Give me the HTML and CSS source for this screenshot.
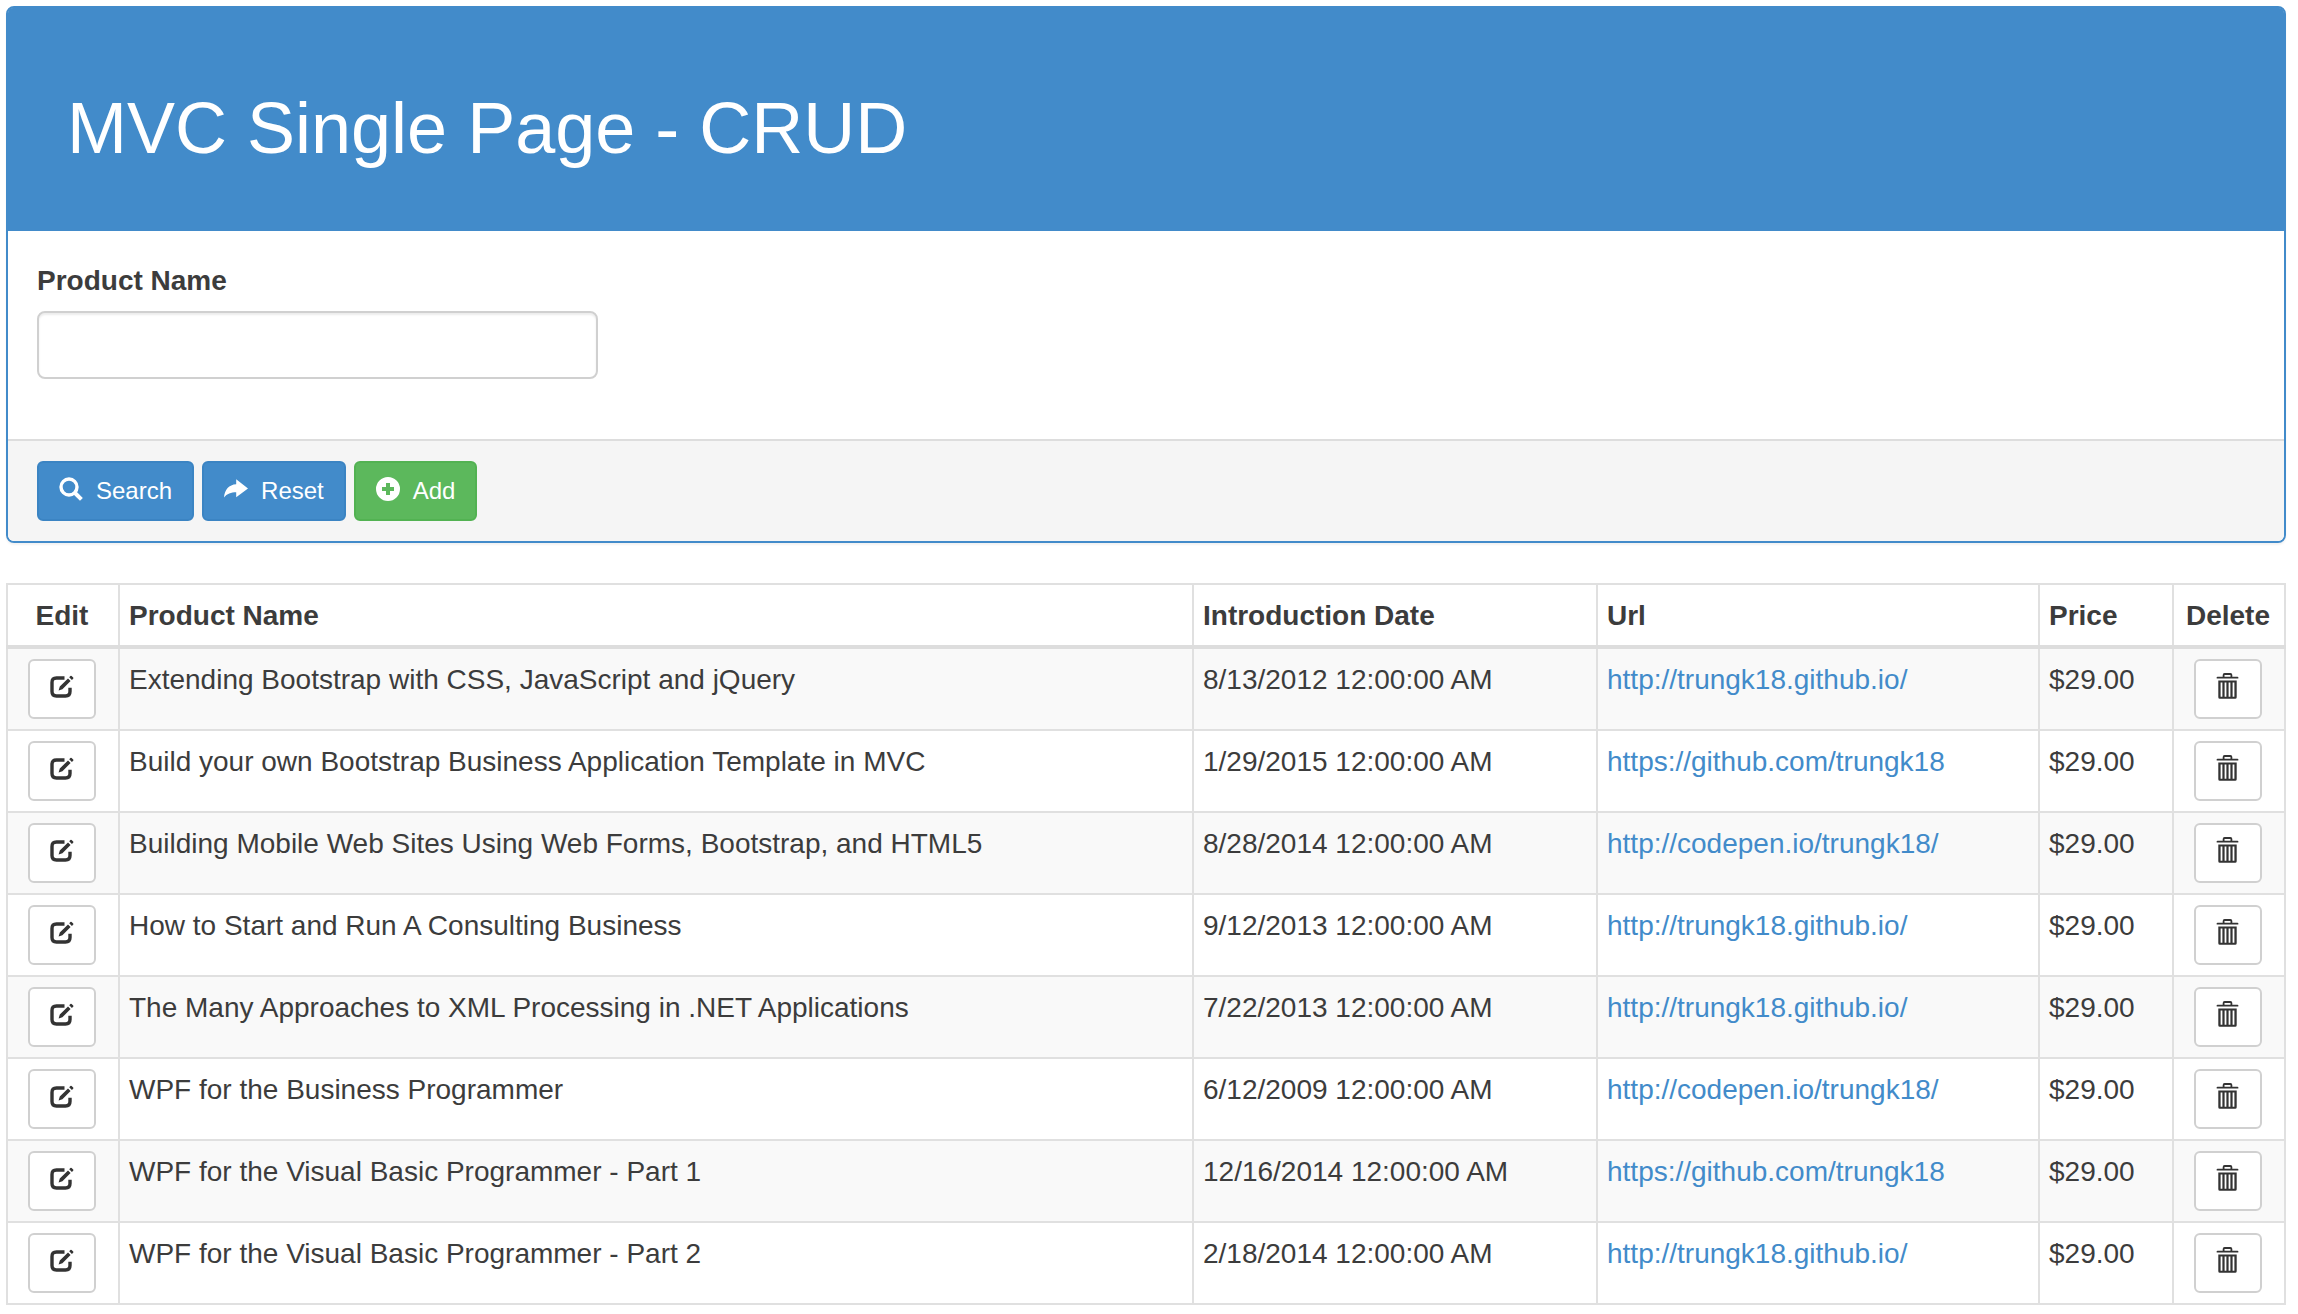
FILE: index.html
```html
<!DOCTYPE html>
<html lang="en">
<head>
<meta charset="utf-8">
<meta name="viewport" content="width=device-width, initial-scale=1">
<title>MVC Single Page - CRUD</title>
<link rel="stylesheet" href="styles.css">
</head>
<body>
<svg class="sprite" aria-hidden="true">
  <symbol id="icon-search" viewBox="0 0 24 24">
    <circle cx="10" cy="10" r="8" fill="none" stroke="currentColor" stroke-width="3.4"/>
    <path d="M15.5 15.5L22.4 22.4" stroke="currentColor" stroke-width="4"/>
  </symbol>
  <symbol id="icon-share" viewBox="0 0 24 24">
    <path d="M12.2 2.3L24 11.5L12.2 20.3V15.2C7 15.2 3 16.6 0 20.4C.6 12.6 5 7.6 12.2 7.2Z" fill="currentColor"/>
  </symbol>
  <symbol id="icon-plus" viewBox="0 0 24 24">
    <path fill-rule="evenodd" d="M12 0a12 12 0 1 0 0 24a12 12 0 1 0 0-24ZM10 6h4v4h4v4h-4v4h-4v-4H6v-4h4Z" fill="currentColor"/>
  </symbol>
  <symbol id="icon-edit" viewBox="0 0 24 24">
    <path d="M14.5 3H6.5Q2 3 2 7.5V16.5Q2 21 6.5 21H15.5Q20 21 20 16.5V12.8" fill="none" stroke="currentColor" stroke-width="3.4"/>
    <path d="M18 3.4L20.6 6L12.4 14.2L8.6 15.4L9.8 11.6ZM19.2 2.2L20.4 1Q21 .6 21.6 1L23.2 2.6Q23.6 3.2 23.2 3.8L21.9 4.9Z" fill="currentColor"/>
  </symbol>
  <symbol id="icon-trash" viewBox="0 0 24 26">
    <path d="M7.6 4V2Q7.6 1 8.6 1H14.4Q15.4 1 15.4 2V4" fill="none" stroke="currentColor" stroke-width="1.8"/>
    <path d="M.7 5.6V4.6Q.7 3.8 1.5 3.8H21.5Q22.3 3.8 22.3 4.6V5.6Z" fill="currentColor"/>
    <path fill-rule="evenodd" d="M2.3 7.6H20.7V24.2Q20.7 25.8 19.1 25.8H3.9Q2.3 25.8 2.3 24.2ZM4.6 9.6V23.8H6.4V9.6ZM8.6 9.6V23.8H10.4V9.6ZM12.6 9.6V23.8H14.4V9.6ZM16.6 9.6V23.8H18.4V9.6Z" fill="currentColor"/>
  </symbol>
</svg>

<form class="panel">
  <div class="panel-heading">
    <h1 class="panel-title">MVC Single Page - CRUD</h1>
  </div>
  <div class="panel-body">
    <label class="field-label" for="product-name">Product Name</label>
    <input class="field-input" id="product-name" type="text">
  </div>
  <div class="panel-footer">
    <button class="btn btn-primary" type="button"><svg class="icon"><use href="#icon-search"/></svg>Search</button>
    <button class="btn btn-primary" type="button"><svg class="icon"><use href="#icon-share"/></svg>Reset</button>
    <button class="btn btn-success" type="button"><svg class="icon"><use href="#icon-plus"/></svg>Add</button>
  </div>
</form>

<table class="products">
  <colgroup>
    <col class="col-action"><col><col class="col-date"><col class="col-url"><col class="col-price"><col class="col-action">
  </colgroup>
  <thead>
    <tr><th class="action">Edit</th><th>Product Name</th><th>Introduction Date</th><th>Url</th><th>Price</th><th class="action">Delete</th></tr>
  </thead>
  <tbody>
    <tr>
      <td class="action"><button class="btn btn-default" type="button" aria-label="Edit"><svg class="icon"><use href="#icon-edit"/></svg></button></td>
      <td>Extending Bootstrap with CSS, JavaScript and jQuery</td><td>8/13/2012 12:00:00 AM</td>
      <td><a href="http://trungk18.github.io/">http://trungk18.github.io/</a></td><td>$29.00</td>
      <td class="action"><button class="btn btn-default" type="button" aria-label="Delete"><svg class="icon icon-tall"><use href="#icon-trash"/></svg></button></td>
    </tr>
    <tr>
      <td class="action"><button class="btn btn-default" type="button" aria-label="Edit"><svg class="icon"><use href="#icon-edit"/></svg></button></td>
      <td>Build your own Bootstrap Business Application Template in MVC</td><td>1/29/2015 12:00:00 AM</td>
      <td><a href="https://github.com/trungk18">https://github.com/trungk18</a></td><td>$29.00</td>
      <td class="action"><button class="btn btn-default" type="button" aria-label="Delete"><svg class="icon icon-tall"><use href="#icon-trash"/></svg></button></td>
    </tr>
    <tr>
      <td class="action"><button class="btn btn-default" type="button" aria-label="Edit"><svg class="icon"><use href="#icon-edit"/></svg></button></td>
      <td>Building Mobile Web Sites Using Web Forms, Bootstrap, and HTML5</td><td>8/28/2014 12:00:00 AM</td>
      <td><a href="http://codepen.io/trungk18/">http://codepen.io/trungk18/</a></td><td>$29.00</td>
      <td class="action"><button class="btn btn-default" type="button" aria-label="Delete"><svg class="icon icon-tall"><use href="#icon-trash"/></svg></button></td>
    </tr>
    <tr>
      <td class="action"><button class="btn btn-default" type="button" aria-label="Edit"><svg class="icon"><use href="#icon-edit"/></svg></button></td>
      <td>How to Start and Run A Consulting Business</td><td>9/12/2013 12:00:00 AM</td>
      <td><a href="http://trungk18.github.io/">http://trungk18.github.io/</a></td><td>$29.00</td>
      <td class="action"><button class="btn btn-default" type="button" aria-label="Delete"><svg class="icon icon-tall"><use href="#icon-trash"/></svg></button></td>
    </tr>
    <tr>
      <td class="action"><button class="btn btn-default" type="button" aria-label="Edit"><svg class="icon"><use href="#icon-edit"/></svg></button></td>
      <td>The Many Approaches to XML Processing in .NET Applications</td><td>7/22/2013 12:00:00 AM</td>
      <td><a href="http://trungk18.github.io/">http://trungk18.github.io/</a></td><td>$29.00</td>
      <td class="action"><button class="btn btn-default" type="button" aria-label="Delete"><svg class="icon icon-tall"><use href="#icon-trash"/></svg></button></td>
    </tr>
    <tr>
      <td class="action"><button class="btn btn-default" type="button" aria-label="Edit"><svg class="icon"><use href="#icon-edit"/></svg></button></td>
      <td>WPF for the Business Programmer</td><td>6/12/2009 12:00:00 AM</td>
      <td><a href="http://codepen.io/trungk18/">http://codepen.io/trungk18/</a></td><td>$29.00</td>
      <td class="action"><button class="btn btn-default" type="button" aria-label="Delete"><svg class="icon icon-tall"><use href="#icon-trash"/></svg></button></td>
    </tr>
    <tr>
      <td class="action"><button class="btn btn-default" type="button" aria-label="Edit"><svg class="icon"><use href="#icon-edit"/></svg></button></td>
      <td>WPF for the Visual Basic Programmer - Part 1</td><td>12/16/2014 12:00:00 AM</td>
      <td><a href="https://github.com/trungk18">https://github.com/trungk18</a></td><td>$29.00</td>
      <td class="action"><button class="btn btn-default" type="button" aria-label="Delete"><svg class="icon icon-tall"><use href="#icon-trash"/></svg></button></td>
    </tr>
    <tr>
      <td class="action"><button class="btn btn-default" type="button" aria-label="Edit"><svg class="icon"><use href="#icon-edit"/></svg></button></td>
      <td>WPF for the Visual Basic Programmer - Part 2</td><td>2/18/2014 12:00:00 AM</td>
      <td><a href="http://trungk18.github.io/">http://trungk18.github.io/</a></td><td>$29.00</td>
      <td class="action"><button class="btn btn-default" type="button" aria-label="Delete"><svg class="icon icon-tall"><use href="#icon-trash"/></svg></button></td>
    </tr>
  </tbody>
</table>
</body>
</html>
```
FILE: styles.css
```css
* {
  box-sizing: border-box;
}

body {
  margin: 0;
  padding: 6px 12px 8px 6px;
  background: #fff;
  color: #3c3c3c;
  font: 28px/40px "Liberation Sans", Arial, sans-serif;
}

a {
  color: #428bca;
  text-decoration: none;
}

.sprite {
  display: none;
}

.panel {
  margin: 0 0 40px;
  border: 2px solid #428bca;
  border-radius: 8px;
  background: #fff;
  box-shadow: 0 2px 2px rgba(0, 0, 0, 0.05);
}

.panel-heading {
  padding: 80px 59px 63px;
  border-radius: 5px 5px 0 0;
  background: #428bca;
  color: #fff;
}

.panel-title {
  margin: 0;
  font-size: 72px;
  font-weight: 400;
  line-height: 80px;
}

.panel-body {
  padding: 30px 29px 60px;
}

.field-label {
  display: block;
  margin-bottom: 10px;
  font-weight: 700;
}

.field-input {
  display: block;
  width: 100%;
  max-width: 561px;
  height: 68px;
  padding: 12px 24px;
  border: 2px solid #d0d0d0;
  border-radius: 8px;
  background: #fff;
  box-shadow: inset 0 2px 2px rgba(0, 0, 0, 0.075);
  color: #555;
  font: inherit;
}

.panel-footer {
  display: flex;
  gap: 8px;
  padding: 20px 29px;
  border-top: 2px solid #ddd;
  border-radius: 0 0 6px 6px;
  background: #f5f5f5;
}

.btn {
  display: inline-flex;
  align-items: center;
  gap: 13px;
  height: 60px;
  padding: 0 20px;
  border: 2px solid;
  border-radius: 6px;
  font: 24px/36px "Liberation Sans", Arial, sans-serif;
  cursor: pointer;
}

.btn-primary {
  border-color: #3b84c3;
  background: #428bca;
  color: #fff;
}

.btn-success {
  border-color: #52b252;
  background: #5cb85c;
  color: #fff;
}

.btn-default {
  border-color: #d0d0d0;
  background: #fff;
  color: #333;
}

.icon {
  width: 24px;
  height: 24px;
  margin-bottom: 4px;
}

.icon-tall {
  height: 26px;
  margin-bottom: 6px;
}

.products {
  width: 100%;
  border-collapse: collapse;
  table-layout: fixed;
}

.col-action {
  width: 112px;
}

.col-date {
  width: 404px;
}

.col-url {
  width: 442px;
}

.col-price {
  width: 134px;
}

.products th,
.products td {
  padding: 11px 9px 9px;
  border: 2px solid #e0e0e0;
  text-align: left;
  vertical-align: top;
}

.products thead th {
  border-bottom: 4px solid #ddd;
}

.products .action {
  padding-right: 2px;
  padding-left: 0;
  text-align: center;
}

.products td.action {
  padding-top: 10px;
  padding-bottom: 10px;
}

.products .btn {
  display: flex;
  margin: 0 auto;
}

.products tbody tr:nth-child(odd) {
  background: #f9f9f9;
}
```
